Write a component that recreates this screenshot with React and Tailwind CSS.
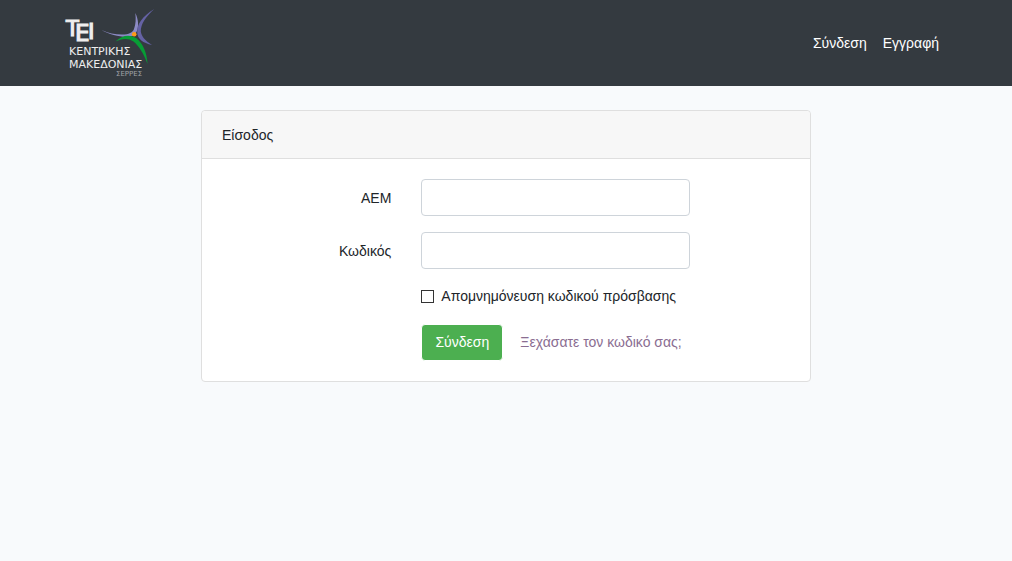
function Logo() {
  return (
    <svg className="block h-[70px] w-[100px]" viewBox="60 9 100 70" role="img" aria-label="ΤΕΙ Κεντρικής Μακεδονίας Σέρρες">
      <path d="M101.500 31C108 34 115 35.600 122 35.600C129 35.600 132.800 33.500 134 30C135.800 25 136 20 135.300 14C138.800 21 138.800 28 136.500 33L133.500 36.500C128 39.500 111 37 101.500 31Z" fill="#8c8ac4" />
      <path d="M154.300 10C142 17.500 137 25 137.200 33.500C137.500 40 143 44 152 46C145 41.500 141.500 37.500 140.800 32.500C140.600 25 146 17.500 154.300 10Z" fill="#6562a4" />
      <path d="M115.500 42.500C122 36 130 35 136.500 39.300C143 44.500 147 54 147.500 65C143.500 54.500 139 47 133.500 42.600C128.500 39 122 39.500 115.500 42.500Z" fill="#079c35" />
      <circle cx="134.200" cy="35.200" r="2.300" fill="#ff9a17" />
      <g fill="#eeeeee" fontFamily="'DejaVu Sans', sans-serif">
        <g stroke="#eeeeee" strokeWidth="1.200">
          <text x="66" y="37" fontSize="21">Τ</text>
          <text x="75" y="42" fontSize="23">Ε</text>
          <text x="88" y="40" fontSize="22">Ι</text>
        </g>
        <text x="69" y="56" fontSize="11">ΚΕΝΤΡΙΚΗΣ</text>
        <text x="69" y="69" fontSize="11">ΜΑΚΕΔΟΝΙΑΣ</text>
        <text x="116" y="77" fontSize="7" fill="#a0a3a6">ΣΕΡΡΕΣ</text>
      </g>
    </svg>
  );
}

function Field({ id, label, type }) {
  return (
    <div className="mb-4 grid grid-cols-12 items-start">
      <label htmlFor={id} className="col-span-4 px-[15px] pt-2 text-right">{label}</label>
      <div className="col-span-6 px-[15px]">
        <input id={id} type={type} className="block h-[37px] w-full rounded border border-[#ced4da] bg-white px-3" />
      </div>
    </div>
  );
}

export default function App() {
  return (
    <div className="min-h-screen bg-[#f8fafc] font-['Liberation_Sans',Arial,sans-serif] text-[14px] leading-[23px] text-[#212529]">
      <header className="bg-[#343a40] py-2">
        <div className="mx-auto flex max-w-[960px] items-center justify-between pr-[39px] pl-[34px]">
          <a href="#home"><Logo /></a>
          <nav className="flex text-white">
            <a href="#login" className="p-2">Σύνδεση</a>
            <a href="#register" className="p-2">Εγγραφή</a>
          </nav>
        </div>
      </header>

      <main className="mx-auto max-w-[640px] px-[15px] py-6">
        <section className="rounded border border-[#dfdfdf] bg-white">
          <h1 className="rounded-t border-b border-[#dfdfdf] bg-[#f7f7f7] px-5 pt-[13px] pb-[11px]">Είσοδος</h1>
          <form className="px-[5px] py-5">
            <Field id="aem" label="ΑΕΜ" type="text" />
            <Field id="password" label="Κωδικός" type="password" />
            <div className="mb-4 grid grid-cols-12">
              <label className="col-span-6 col-start-5 flex items-center gap-[7px] px-[15px] whitespace-nowrap">
                <input type="checkbox" className="size-[13px] shrink-0 appearance-none border border-[#333333] bg-white checked:bg-[#333333]" />
                Απομνημόνευση κωδικού πρόσβασης
              </label>
            </div>
            <div className="grid grid-cols-12">
              <div className="col-span-8 col-start-5 flex items-center gap-[5px] px-[15px]">
                <button type="submit" className="h-[37px] min-w-[82px] rounded border border-white bg-[#4caf50] px-3 text-white">Σύνδεση</button>
                <a href="#reset" className="px-3 text-[#8a6d91]">Ξεχάσατε τον κωδικό σας;</a>
              </div>
            </div>
          </form>
        </section>
      </main>
    </div>
  );
}
